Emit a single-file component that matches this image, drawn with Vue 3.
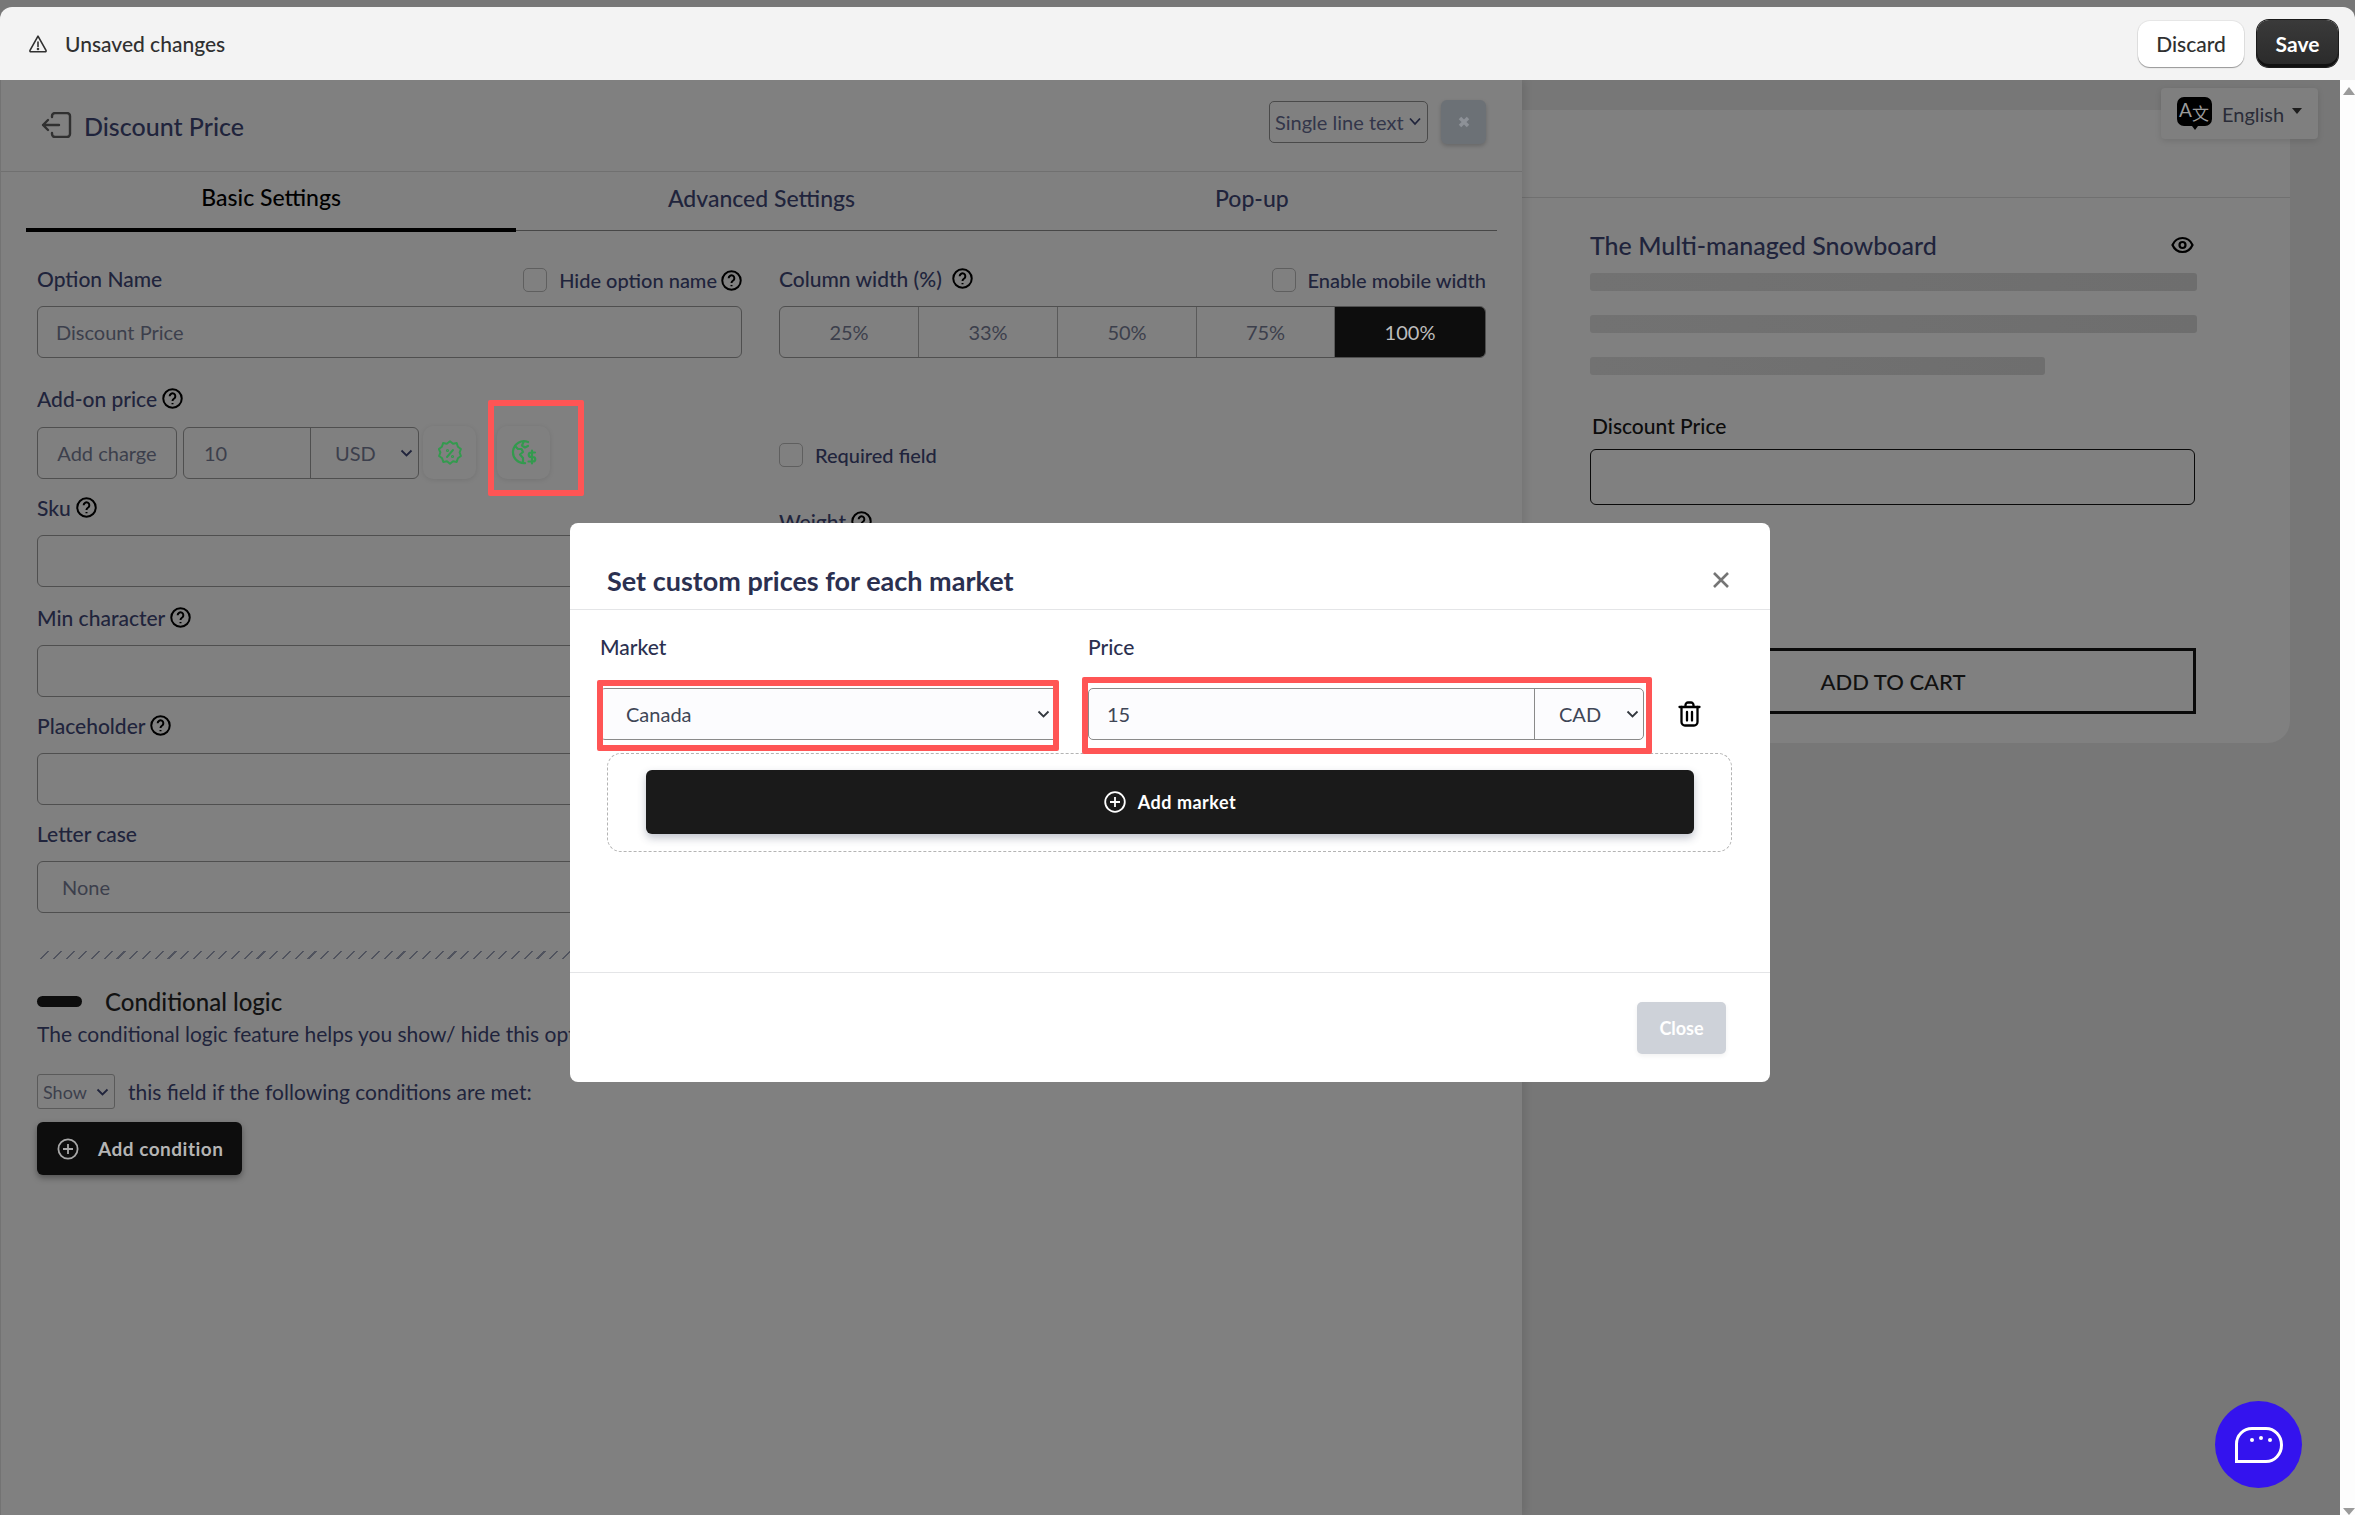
<script setup>
const widths = [
  { label: '25%', w: 139 },
  { label: '33%', w: 139 },
  { label: '50%', w: 139 },
  { label: '75%', w: 138 },
  { label: '100%', w: 152, active: true },
]
const tabs = [
  { label: 'Basic Settings', active: true },
  { label: 'Advanced Settings' },
  { label: 'Pop-up' },
]
</script>

<template>
  <div class="app">
    <header class="savebar">
      <div class="savebar-left">
        <svg class="warn" width="20" height="20" viewBox="0 0 20 20" fill="none" stroke="#303030" stroke-width="1.6" stroke-linejoin="round" stroke-linecap="round">
          <path d="M10 2.2 18 16.3a1 1 0 0 1-.9 1.5H2.9a1 1 0 0 1-.9-1.5z" />
          <path d="M10 8v4.5" />
          <circle cx="10" cy="15" r=".5" />
        </svg>
        <span>Unsaved changes</span>
      </div>
      <div class="savebar-actions">
        <button class="btn-discard">Discard</button>
        <button class="btn-save">Save</button>
      </div>
    </header>

    <main class="workspace">
      <section class="panel">
        <div class="panel-head">
          <svg class="back" width="31" height="26" viewBox="0 0 31 26" fill="none" stroke="#303030" stroke-width="2.4" stroke-linecap="round" stroke-linejoin="round">
            <path d="M11 5V4a3 3 0 0 1 3-3h12a3 3 0 0 1 3 3v18a3 3 0 0 1-3 3H14a3 3 0 0 1-3-3v-1" />
            <path d="M18 13H2M7 8l-5 5 5 5" />
          </svg>
          <h1>Discount Price</h1>
          <div class="type-select">
            <span>Single line text</span>
            <svg width="14" height="9" viewBox="0 0 14 9" fill="none" stroke="#20243c" stroke-width="1.8"><path d="M2 1.5 7 7l5-5.500" /></svg>
          </div>
          <button class="head-close">
            <svg width="14" height="14" viewBox="0 0 14 14" stroke="#8d9197" stroke-width="3.500"><path d="M3 3l8 8M11 3l-8 8" /></svg>
          </button>
        </div>

        <nav class="tabs">
          <div v-for="t in tabs" :key="t.label" class="tab" :class="{ on: t.active }">{{ t.label }}</div>
        </nav>

        <div class="form">
          <div class="col">
            <div class="label-row">
              <label>Option Name</label>
              <div class="check"><i></i><span>Hide option name</span>
                <svg class="help" viewBox="0 0 20 20" fill="none" stroke="#000" stroke-width="1.900"><circle cx="10" cy="10" r="8.800" /><path d="M7.300 7.800a2.700 2.700 0 1 1 4.300 2.200c-1 .7-1.600 1.200-1.600 2.300" /><path d="M10 14.300v1.200" /></svg>
              </div>
            </div>
            <div class="control text-control muted">Discount Price</div>

            <div class="label-row spaced">
              <label class="with-help">Add-on price
                <svg class="help" viewBox="0 0 20 20" fill="none" stroke="#000" stroke-width="1.900"><circle cx="10" cy="10" r="8.800" /><path d="M7.300 7.800a2.700 2.700 0 1 1 4.300 2.200c-1 .7-1.600 1.200-1.600 2.300" /><path d="M10 14.300v1.200" /></svg>
              </label>
            </div>
            <div class="price-row">
              <div class="control charge muted">Add charge</div>
              <div class="control money">
                <span class="amount">10</span>
                <span class="currency">USD
                  <svg width="13" height="8" viewBox="0 0 13 8" fill="none" stroke="#20243c" stroke-width="1.800"><path d="M1.500 1.500 6.500 6.500l5-5" /></svg>
                </span>
              </div>
              <button class="icon-btn first">
                <svg width="24" height="26" viewBox="0 0 24 26" fill="none" stroke="#339a4e" stroke-width="2" stroke-linecap="round" stroke-linejoin="round">
                  <path d="M12 1.500l3 2.400 3.700-.6 1.200 3.600 3 2.300-1.300 3.500 1.300 3.500-3 2.300-1.200 3.600-3.700-.6-3 2.400-3-2.400-3.700.6-1.200-3.600-3-2.300 1.300-3.500L.900 9.200l3-2.300 1.200-3.600 3.700.6z" transform="translate(0 -.2)" />
                  <path d="M15 10l-6 7" />
                  <circle cx="9.500" cy="10.500" r=".6" />
                  <circle cx="14.500" cy="16.500" r=".6" />
                </svg>
              </button>
              <button class="icon-btn">
                <svg width="26" height="25" viewBox="0 0 26 25" fill="none" stroke="#339a4e" stroke-width="2.200" stroke-linecap="round" stroke-linejoin="round">
                  <path d="M14 23.200A11 11 0 1 1 17 2" />
                  <path d="M4 6l3 3h3.500l1.500 3-3 2.500 3 3.500v5" />
                  <path d="M12.500 2 11 5.500l3 2 3-1.500" />
                  <path d="M24 12.500h-4a2 2 0 0 0 0 4.500h2a2 2 0 0 1 0 4.500h-4.500M21 10.500v13" />
                </svg>
              </button>
            </div>

            <label class="with-help">Sku
              <svg class="help" viewBox="0 0 20 20" fill="none" stroke="#000" stroke-width="1.900"><circle cx="10" cy="10" r="8.800" /><path d="M7.300 7.800a2.700 2.700 0 1 1 4.300 2.200c-1 .7-1.600 1.200-1.600 2.300" /><path d="M10 14.300v1.200" /></svg>
            </label>
            <div class="control"></div>
            <label class="with-help nudge">Min character
              <svg class="help" viewBox="0 0 20 20" fill="none" stroke="#000" stroke-width="1.900"><circle cx="10" cy="10" r="8.800" /><path d="M7.300 7.800a2.700 2.700 0 1 1 4.300 2.200c-1 .7-1.600 1.200-1.600 2.300" /><path d="M10 14.300v1.200" /></svg>
            </label>
            <div class="control"></div>
            <label class="with-help">Placeholder
              <svg class="help" viewBox="0 0 20 20" fill="none" stroke="#000" stroke-width="1.900"><circle cx="10" cy="10" r="8.800" /><path d="M7.300 7.800a2.700 2.700 0 1 1 4.300 2.200c-1 .7-1.600 1.200-1.600 2.300" /><path d="M10 14.300v1.200" /></svg>
            </label>
            <div class="control"></div>
            <label>Letter case</label>
            <div class="control text-control muted none">None</div>
          </div>

          <div class="col">
            <div class="label-row">
              <label class="with-help wide">Column width (%)
                <svg class="help" viewBox="0 0 20 20" fill="none" stroke="#000" stroke-width="1.900"><circle cx="10" cy="10" r="8.800" /><path d="M7.300 7.800a2.700 2.700 0 1 1 4.300 2.200c-1 .7-1.600 1.200-1.600 2.300" /><path d="M10 14.300v1.200" /></svg>
              </label>
              <div class="check"><i></i><span>Enable mobile width</span></div>
            </div>
            <div class="segments">
              <div v-for="s in widths" :key="s.label" class="segment" :class="{ on: s.active }" :style="{ width: s.w + 'px' }">{{ s.label }}</div>
            </div>
            <div class="check required"><i></i><span>Required field</span></div>
            <label class="with-help">Weight
              <svg class="help" viewBox="0 0 20 20" fill="none" stroke="#000" stroke-width="1.900"><circle cx="10" cy="10" r="8.800" /><path d="M7.300 7.800a2.700 2.700 0 1 1 4.300 2.200c-1 .7-1.600 1.200-1.600 2.300" /><path d="M10 14.300v1.200" /></svg>
            </label>
            <div class="control"></div>
          </div>
        </div>

        <div class="logic">
          <div class="hatch"></div>
          <div class="logic-title"><i class="toggle"></i><span>Conditional logic</span></div>
          <p class="logic-desc">The conditional logic feature helps you show/ hide this option based on the choices your customers make.</p>
          <div class="logic-rule">
            <div class="mini-select">
              <span>Show</span>
              <svg width="13" height="8" viewBox="0 0 13 8" fill="none" stroke="#20243c" stroke-width="1.800"><path d="M1.500 1.500 6.500 6.500l5-5" /></svg>
            </div>
            <span>this field if the following conditions are met:</span>
          </div>
          <button class="add-condition">
            <svg width="22" height="22" viewBox="0 0 22 22" fill="none" stroke="#a8a8a8" stroke-width="1.800"><circle cx="11" cy="11" r="9.600" /><path d="M11 6v10M6 11h10" /></svg>
            <span>Add condition</span>
          </button>
        </div>
      </section>

      <section class="preview">
        <div class="card">
          <div class="card-top"></div>
          <div class="card-body">
            <div class="card-title">
              <span>The Multi-managed Snowboard</span>
              <svg width="23" height="18" viewBox="0 0 23 18" fill="none" stroke="#000" stroke-width="2.200"><path d="M1.500 9C3.500 4.500 7 2 11.500 2s8 2.500 10 7c-2 4.500-5.500 7-10 7s-8-2.500-10-7z" /><circle cx="11.500" cy="9" r="3" /></svg>
            </div>
            <div class="bar"></div>
            <div class="bar"></div>
            <div class="bar short"></div>
            <div class="field-name">Discount Price</div>
            <div class="preview-input"></div>
            <div class="add-cart">ADD TO CART</div>
          </div>
        </div>
        <div class="lang">
          <svg width="35" height="33" viewBox="0 0 35 33">
            <path d="M7 0h21a7 7 0 0 1 7 7v15a7 7 0 0 1-7 7h-7l-3 4-3-4H7a7 7 0 0 1-7-7V7a7 7 0 0 1 7-7z" fill="#000" />
            <text x="2" y="20" font-size="19" font-family="Lato, sans-serif" fill="#9a9a9a">A</text>
            <text x="15" y="23" font-size="17" font-family="'Noto Sans CJK SC', sans-serif" fill="#9a9a9a">文</text>
          </svg>
          <span>English</span>
          <i class="caret"></i>
        </div>
      </section>

      <aside class="scrollbar">
        <i class="arrow up"></i>
        <i class="arrow down"></i>
      </aside>
    </main>

    <button class="chat">
      <svg width="48" height="36" viewBox="0 0 48 36" fill="none" stroke="#fff" stroke-width="3">
        <path d="M1.500 34.500V17A15.500 15.500 0 0 1 17 1.500h14a15.500 16.500 0 0 1 0 33z" />
        <circle cx="17" cy="13" r="2" fill="#fff" stroke="none" />
        <circle cx="26" cy="11" r="2" fill="#fff" stroke="none" />
        <circle cx="35" cy="13" r="2" fill="#fff" stroke="none" />
      </svg>
    </button>

    <div class="modal">
      <div class="modal-head">
        <h2>Set custom prices for each market</h2>
        <svg width="18" height="18" viewBox="0 0 18 18" stroke="#757575" stroke-width="2.600"><path d="M2 2l14 14M16 2 2 16" /></svg>
      </div>
      <div class="modal-body">
        <div class="market-grid">
          <label class="m-label">Market</label>
          <label class="m-label">Price</label>
          <div class="m-control market">
            <span>Canada</span>
            <svg width="13" height="8" viewBox="0 0 13 8" fill="none" stroke="#33383f" stroke-width="1.800"><path d="M1.500 1.500 6.500 6.500l5-5" /></svg>
          </div>
          <div class="price-cell">
            <div class="m-control price">
              <span class="p-amount">15</span>
              <span class="p-currency">CAD
                <svg width="13" height="8" viewBox="0 0 13 8" fill="none" stroke="#33383f" stroke-width="1.800"><path d="M1.500 1.500 6.500 6.500l5-5" /></svg>
              </span>
            </div>
            <svg class="trash" width="23" height="26" viewBox="0 0 23 26" fill="none" stroke="#000" stroke-width="2.300" stroke-linecap="round" stroke-linejoin="round">
              <path d="M1.500 6h20M7.500 5.500V4a2.500 2.500 0 0 1 2.500-2.500h3A2.500 2.500 0 0 1 15.500 4v1.500" />
              <path d="M3.500 6v15a3.500 3.500 0 0 0 3.500 3.500h9a3.500 3.500 0 0 0 3.500-3.500V6" />
              <path d="M9 11v8.500M14 11v8.500" />
            </svg>
          </div>
        </div>
        <div class="dashed">
          <button class="add-market">
            <svg width="22" height="22" viewBox="0 0 22 22" fill="none" stroke="#fff" stroke-width="1.800"><circle cx="11" cy="11" r="9.800" /><path d="M11 6v10M6 11h10" /></svg>
            <span>Add market</span>
          </button>
        </div>
      </div>
      <div class="modal-foot">
        <button class="modal-close">Close</button>
      </div>
    </div>

    <div class="mark mark-globe"></div>
    <div class="mark mark-market"></div>
    <div class="mark mark-price"></div>
  </div>
</template>

<style>
html, body { margin: 0; padding: 0; background: #777; }
</style>

<style scoped>
* { box-sizing: border-box; }
button { font-family: inherit; border: none; padding: 0; margin: 0; }
h1, h2, p { margin: 0; }
i { display: block; }

.app {
  position: relative;
  width: 2355px;
  height: 1515px;
  overflow: hidden;
  background: #777;
  padding-top: 7px;
  display: flex;
  flex-direction: column;
  font-family: Lato, "Noto Sans", sans-serif;
  color: #20243c;
}

.savebar {
  height: 73px;
  flex: none;
  background: #f3f3f3;
  border-radius: 12px 12px 0 0;
  display: flex;
  align-items: center;
  justify-content: space-between;
  padding: 0 17px 0 28px;
  position: relative;
  z-index: 3;
}
.savebar-left { display: flex; align-items: center; gap: 17px; font-size: 21px; font-weight: 500; color: #303030; }
.savebar-actions { display: flex; align-items: center; gap: 13px; }
.btn-discard {
  width: 106px; height: 46px; border-radius: 12px; background: #fff; color: #303030;
  font-size: 21px; font-weight: 500;
  box-shadow: 0 1px 1px rgba(0,0,0,.35), 0 0 0 1px rgba(0,0,0,.05);
}
.btn-save {
  width: 81px; height: 47px; border-radius: 12px; color: #fff; font-size: 21px; font-weight: 700;
  background: linear-gradient(#3a3a3a, #2a2a2a);
  box-shadow: inset 0 -3px 0 #111, 0 0 0 1px #1a1a1a;
}

.workspace { flex: 1; display: flex; min-height: 0; }

.panel {
  width: 1522px;
  flex: none;
  background: #808080;
  border-left: 1px solid #737373;
  box-shadow: 3px 0 8px rgba(0,0,0,.1);
  position: relative;
  z-index: 1;
}
.panel-head {
  height: 92px;
  border-bottom: 1.500px solid #707070;
  display: flex;
  align-items: center;
  padding: 0 36px 0 40px;
  position: relative;
}
.back { flex: none; margin-top: -2px; }
.panel-head h1 { font-size: 25px; font-weight: 500; margin-left: 12px; flex: 1; color: #20243c; }
.type-select {
  width: 159px; height: 42px; margin-top: -8px; border: 1.500px solid #4a4a4a; border-radius: 5px;
  display: flex; align-items: center; justify-content: space-between; padding: 0 5px 0 5px;
  font-size: 20px; color: #33364a;
}
.head-close {
  width: 45px; height: 44px; margin: -7px 0 0 13px; border-radius: 6px; background: #6c7176;
  box-shadow: 0 2px 4px rgba(0,0,0,.2); display: flex; align-items: center; justify-content: center;
}

.tabs {
  display: flex;
  margin: 0 25px;
  width: 1471px;
  height: 59px;
  border-bottom: 1.500px solid #474747;
}
.tab {
  flex: 1;
  display: flex;
  align-items: center;
  justify-content: center;
  padding-bottom: 6px;
  font-size: 23px;
  font-weight: 500;
  color: #20243c;
}
.tab.on { color: #000; border-bottom: 4px solid #000; margin-bottom: -1.500px; }

.form {
  display: grid;
  grid-template-columns: 705px 707px;
  column-gap: 37px;
  padding: 33px 0 0 36px;
}
.col { display: flex; flex-direction: column; gap: 14px; }
.label-row { height: 28px; display: flex; align-items: center; justify-content: space-between; }
.label-row.spaced { margin-top: 12px; }
label {
  height: 28px; display: flex; align-items: center; font-size: 21px; font-weight: 500; color: #20243c;
}
.with-help { gap: 3px; }
.with-help.wide { gap: 8px; }
.nudge { margin-top: 2px; }
.help { width: 21px; height: 21px; flex: none; margin-left: 2px; }
.check { display: flex; align-items: center; font-size: 20px; font-weight: 500; color: #20243c; margin-top: 4px; }
.check i { width: 24px; height: 24px; border: 1.500px solid #5f5f5f; border-radius: 5px; margin-right: 12px; }
.check .help { margin-left: 4px; }
.required { height: 24px; margin-top: 71px; margin-bottom: 26px; }

.control {
  height: 52px; border: 1.500px solid #4f4f4f; border-radius: 6px; flex: none;
}
.text-control { display: flex; align-items: center; padding-left: 18px; }
.muted { font-size: 20px; color: #3c3f4c; }
.none { padding-left: 24px; }

.price-row { display: flex; align-items: center; }
.charge { width: 140px; display: flex; align-items: center; justify-content: center; }
.money { width: 236px; margin-left: 6px; display: flex; align-items: stretch; font-size: 20px; color: #3c3f4c; }
.amount { width: 127px; border-right: 1.500px solid #4f4f4f; display: flex; align-items: center; padding-left: 20px; }
.currency { flex: 1; display: flex; align-items: center; justify-content: space-between; padding: 0 5px 0 24px; }
.icon-btn {
  width: 53px; height: 53px; margin-left: 21px; border-radius: 10px; background: #808080;
  box-shadow: 0 1px 5px rgba(0,0,0,.1);
  display: flex; align-items: center; justify-content: center;
}
.icon-btn.first { margin-left: 4px; }

.segments {
  display: flex; height: 52px; border: 1.500px solid #4f4f4f; border-radius: 6px; overflow: hidden;
}
.segment {
  display: flex; align-items: center; justify-content: center; font-size: 20px; color: #3c3f4c;
  border-right: 1.500px solid #5a5a5a; flex: none;
}
.segment.on { background: #0d0d0d; color: #bdbdbd; border-right: none; flex: 1; }

.logic { padding: 38px 0 0 36px; }
.hatch {
  height: 8px;
  width: 1450px;
  background: repeating-linear-gradient(135deg, transparent 0 7.500px, #50535e 7.500px 9px);
}
.logic-title { margin-top: 28px; height: 28px; display: flex; align-items: center; gap: 23px; font-size: 24px; font-weight: 500; color: #121212; }
.toggle { width: 45px; height: 11px; border-radius: 6px; background: #0d0d0d; }
.logic-desc { margin-top: 5px; height: 28px; line-height: 28px; font-size: 21px; white-space: nowrap; color: #20243c; }
.logic-rule { margin-top: 26px; display: flex; align-items: center; gap: 13px; font-size: 21px; height: 35px; color: #20243c; }
.mini-select {
  width: 78px; height: 35px; border: 1.500px solid #5a5a5a; border-radius: 3px; font-size: 18px; color: #3c3f4c;
  display: flex; align-items: center; justify-content: space-between; padding: 0 5px 0 5px;
}
.add-condition {
  margin-top: 13px; width: 205px; height: 53px; border-radius: 6px; background: #0d0d0d; color: #b4b4b4;
  font-size: 19px; font-weight: 700; letter-spacing: .5px;
  display: flex; align-items: center; padding-left: 20px; gap: 19px;
  box-shadow: 0 3px 6px rgba(0,0,0,.35);
}

.preview { flex: 1; padding-top: 30px; position: relative; min-width: 0; }
.card {
  width: 768px; height: 633px; background: #808080; border-radius: 0 0 22px 0;
}
.card-top { height: 88px; border-bottom: 1.500px solid #707070; }
.card-body { padding: 33px 93px 0 68px; }
.card-title {
  height: 28px; display: flex; align-items: center; justify-content: space-between; padding-right: 3px;
  font-size: 25px; font-weight: 500; color: #20243c;
}
.bar { height: 18px; margin-top: 24px; border-radius: 3px; background: linear-gradient(90deg, #727272, #6e6e6e); }
.card-title + .bar { margin-top: 14px; }
.bar.short { width: 455px; }
.field-name { margin-top: 37px; height: 28px; line-height: 28px; padding-left: 2px; font-size: 21px; font-weight: 500; color: #0c0c0c; }
.preview-input { margin-top: 9px; height: 56px; width: 605px; border: 1.500px solid #0a0a0a; border-radius: 6px; }
.add-cart {
  margin-top: 143px; height: 66px; width: 606px; border: 3px solid #0a0a0a;
  display: flex; align-items: center; justify-content: center; font-size: 22px; font-weight: 500; color: #111;
}
.lang {
  position: absolute; left: 639px; top: 8px; width: 157px; height: 51px; background: #7f7f7f; border-radius: 4px;
  box-shadow: 0 2px 6px rgba(0,0,0,.12);
  display: flex; align-items: center; padding-left: 16px; font-size: 20px; color: #2a2c38;
}
.lang span { margin-left: 10px; }
.caret { margin: -6px 0 0 8px; width: 0; height: 0; border-left: 5px solid transparent; border-right: 5px solid transparent; border-top: 6px solid #1d1d1d; }

.scrollbar { width: 15px; flex: none; background: #fdfdfd; position: relative; z-index: 3; }
.arrow { position: absolute; left: 3px; width: 0; height: 0; border-left: 6px solid transparent; border-right: 6px solid transparent; }
.arrow.up { top: 7px; border-bottom: 8px solid #9a9a9a; }
.arrow.down { bottom: 0; border-top: 7px solid #9a9a9a; }

.chat {
  position: absolute; left: 2215px; top: 1401px; width: 87px; height: 87px; border-radius: 50%;
  background: #3413ee; display: flex; align-items: center; justify-content: center; z-index: 4;
}

.modal {
  position: absolute; left: 570px; top: 523px; width: 1200px; height: 559px; background: #fff; border-radius: 8px; z-index: 4;
  display: flex; flex-direction: column; color: #2b3050;
}
.modal-head {
  height: 87px; border-bottom: 1.500px solid #e4e5e7; display: flex; align-items: center; justify-content: space-between;
  padding: 28px 40px 0 37px;
}
.modal-head h2 { font-size: 27px; font-weight: 700; color: #2b3050; }
.modal-body { flex: 1; padding: 22px 0 0 30px; }
.market-grid { display: grid; grid-template-columns: 458px 1fr; column-gap: 30px; row-gap: 28px; }
.m-label { height: 28px; font-size: 21px; font-weight: 500; color: #2b3050; }
.m-control {
  height: 52px; background: #fcfcfe; border: 1.500px solid #8a8a8a; border-radius: 5px; font-size: 20px; color: #3f4656;
  display: flex; align-items: center;
}
.market { justify-content: space-between; padding: 0 7px 0 25px; }
.price-cell { display: flex; align-items: center; }
.price { width: 556px; align-items: stretch; }
.p-amount { width: 446px; border-right: 1.500px solid #8a8a8a; display: flex; align-items: center; padding-left: 18px; }
.p-currency { flex: 1; display: flex; align-items: center; justify-content: space-between; padding: 0 4px 0 24px; }
.trash { margin-left: 34px; }
.dashed {
  margin: 13px 0 0 7px; width: 1125px; height: 99px; border: 1.500px dashed #b4b4b4; border-radius: 14px;
  padding: 16px 0 0 38px;
}
.add-market {
  width: 1048px; height: 64px; border-radius: 6px; background: #1a1a1a; color: #fff; font-size: 18px; font-weight: 700; letter-spacing: .5px;
  display: flex; align-items: center; justify-content: center; gap: 12px;
  box-shadow: 0 4px 8px rgba(50,60,90,.3);
}
.modal-foot {
  height: 110px; border-top: 1.500px solid #e4e5e7; display: flex; align-items: center; justify-content: flex-end; padding-right: 44px;
}
.modal-close {
  width: 89px; height: 52px; border-radius: 5px; background: #ced2d9; color: #fff; font-size: 18px; font-weight: 700;
  box-shadow: 0 2px 5px rgba(0,0,0,.06);
}

.mark { position: absolute; border: 6px solid #ff5555; border-radius: 2px; z-index: 5; pointer-events: none; }
.mark-globe { left: 488px; top: 400px; width: 96px; height: 96px; }
.mark-market { left: 597px; top: 680px; width: 462px; height: 71px; }
.mark-price { left: 1082px; top: 677px; width: 570px; height: 77px; }
</style>
